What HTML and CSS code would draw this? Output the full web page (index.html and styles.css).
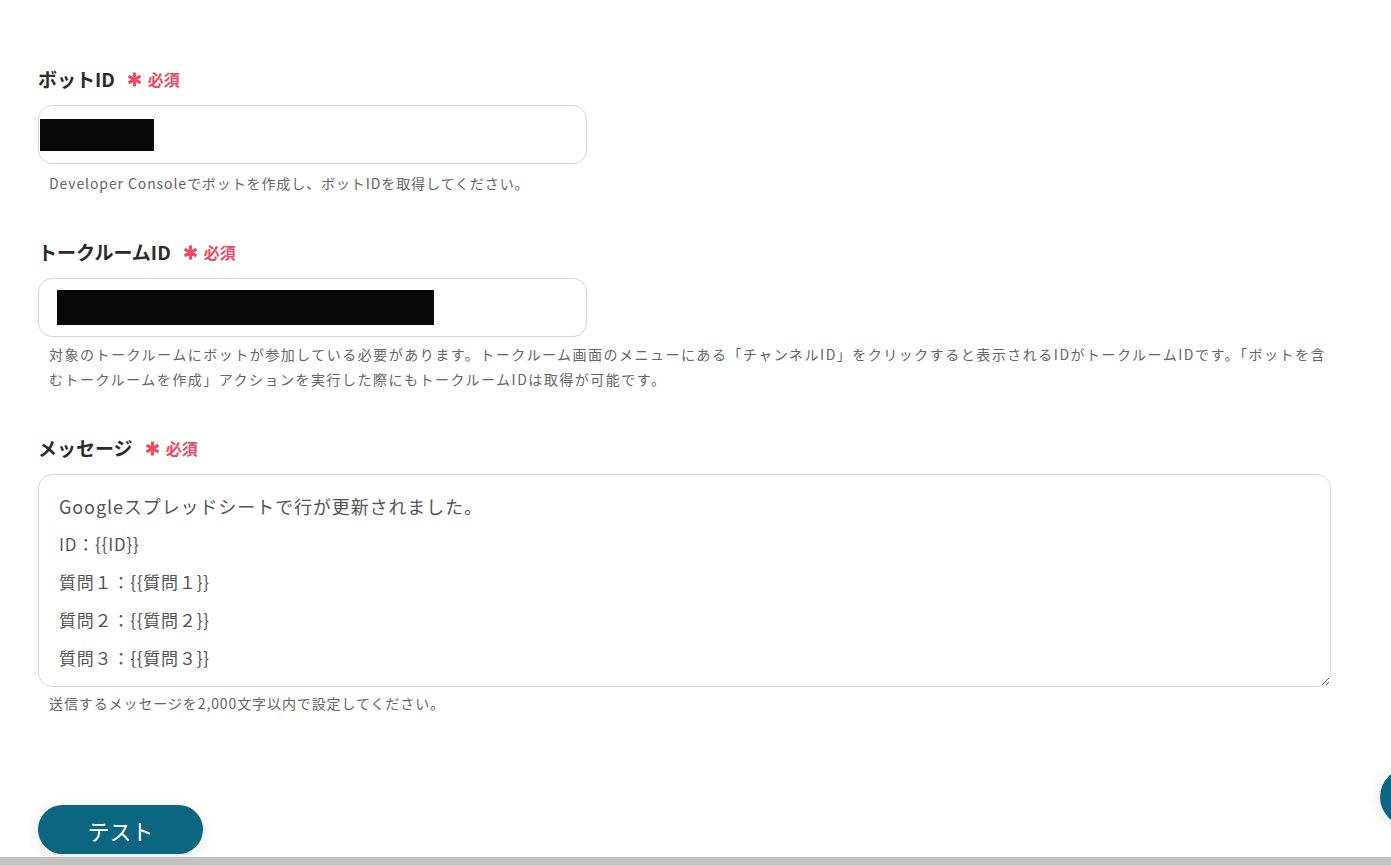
FILE: index.html
```html
<!DOCTYPE html>
<html lang="ja">
<head>
    <meta charset="UTF-8">
    <meta name="viewport" content="width=device-width, initial-scale=1.0">
    <title>メッセージを送信</title>
    <link rel="stylesheet" href="styles.css">
</head>
<body>
    <div class="form">
        <div class="field">
            <label class="label">ボットID
                <span class="required">
                    <svg class="star" viewBox="0 0 16 16"><path d="M8 1.5v13M2.4 4.8l11.2 6.4M2.4 11.2l11.2-6.4"/></svg>必須
                </span>
            </label>
            <div class="input"><span class="masked masked-bot"></span></div>
            <p class="help">Developer Consoleでボットを作成し、ボットIDを取得してください。</p>
        </div>

        <div class="field">
            <label class="label">トークルームID
                <span class="required">
                    <svg class="star" viewBox="0 0 16 16"><path d="M8 1.5v13M2.4 4.8l11.2 6.4M2.4 11.2l11.2-6.4"/></svg>必須
                </span>
            </label>
            <div class="input"><span class="masked masked-room"></span></div>
            <p class="help help-wide">対象のトークルームにボットが参加している必要があります。トークルーム画面のメニューにある「チャンネルID」をクリックすると表示されるIDがトークルームIDです。「ボットを含むトークルームを作成」アクションを実行した際にもトークルームIDは取得が可能です。</p>
        </div>

        <div class="field">
            <label class="label">メッセージ
                <span class="required">
                    <svg class="star" viewBox="0 0 16 16"><path d="M8 1.5v13M2.4 4.8l11.2 6.4M2.4 11.2l11.2-6.4"/></svg>必須
                </span>
            </label>
            <div class="message" contenteditable="true">
                <div class="line line-title">Googleスプレッドシートで行が更新されました。</div>
                <div class="line">ID：{{ID}}</div>
                <div class="line">質問１：{{質問１}}</div>
                <div class="line">質問２：{{質問２}}</div>
                <div class="line">質問３：{{質問３}}</div>
            </div>
            <p class="help">送信するメッセージを2,000文字以内で設定してください。</p>
        </div>

        <div class="actions">
            <button class="test-btn">テスト</button>
        </div>
    </div>

    <div class="fab"></div>
    <div class="scrollbar"></div>
</body>
</html>
```

FILE: styles.css
```css
*{
    box-sizing: border-box;
}
body{
    margin: 0;
    background: #fff;
    font-family: "Noto Sans CJK JP", "Noto Sans", sans-serif;
    color: #333;
    overflow: hidden;
    height: 865px;
    position: relative;
}
.form{
    padding: 66px 0 0 38px;
    width: 1331px;
}
.field{
    margin-bottom: 43px;
}
.label{
    display: flex;
    align-items: center;
    font-size: 19px;
    font-weight: 700;
    line-height: 26px;
    color: #2b2b2b;
    margin-bottom: 13px;
}
.required{
    display: inline-flex;
    align-items: center;
    margin-left: 11px;
    color: #ef4b62;
    font-size: 16px;
    font-weight: 700;
}
.star{
    width: 17px;
    height: 17px;
    margin-right: 5px;
    stroke: #ef4b62;
    stroke-width: 3;
    fill: none;
}
.input{
    width: 549px;
    height: 59px;
    border: 1px solid #d3d7dc;
    border-radius: 14px;
    display: flex;
    align-items: center;
}
.masked{
    display: block;
    background: #080808;
}
.masked-bot{
    width: 114px;
    height: 32px;
    margin-left: 1px;
}
.masked-room{
    width: 377px;
    height: 35px;
    margin-left: 18px;
}
.help{
    margin: 7px 0 0 11px;
    font-size: 14px;
    line-height: 25px;
    color: #666;
    letter-spacing: 0.9px;
}
.help-wide{
    margin-top: 5px;
    letter-spacing: 1.5px;
}
.message{
    width: 1293px;
    height: 213px;
    border: 1px solid #d3d7dc;
    border-radius: 14px;
    padding: 12px 20px;
    color: #555;
    resize: vertical;
    overflow: auto;
    outline: none;
}
.line{
    font-size: 17px;
    line-height: 38px;
    letter-spacing: 0.8px;
}
.line-title{
    font-size: 18px;
    letter-spacing: 0.9px;
}
.message + .help{
    margin-top: 4px;
}
.actions{
    padding-top: 46px;
}
.test-btn{
    width: 165px;
    height: 49px;
    border: none;
    border-radius: 25px;
    background: #0d6680;
    color: #fff;
    font-family: "Noto Sans CJK JP", sans-serif;
    font-size: 22px;
    box-shadow: 0 4px 14px rgba(40, 60, 90, 0.12);
    cursor: pointer;
}
/* floating help button, mostly off the right edge */
.fab{
    position: absolute;
    left: 1380px;
    top: 768px;
    width: 58px;
    height: 58px;
    border-radius: 50%;
    background: #0d6680;
    box-shadow: 0 2px 16px rgba(0, 0, 0, 0.12);
}
.scrollbar{
    position: absolute;
    left: 0;
    right: 0;
    bottom: 0;
    height: 8px;
    background: #c2c2c2;
}
```
